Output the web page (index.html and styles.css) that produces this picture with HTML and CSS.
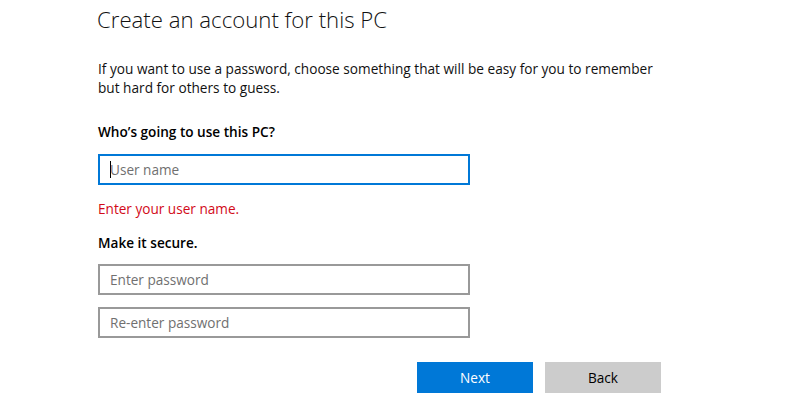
FILE: index.html
```html
<!DOCTYPE html>
<html>
<head>
<meta charset="utf-8">
<link rel="stylesheet" href="styles.css">
</head>
<body>
<div class="page">
  <h1 class="title">Create an account for this PC</h1>
  <p class="intro">If you want to use a password, choose something that will be easy for you to remember<br>but hard for others to guess.</p>
  <h2 class="label">Who’s going to use this PC?</h2>
  <div class="field field-focus"><span class="caret"></span><span class="ph">User name</span></div>
  <p class="error">Enter your user name.</p>
  <h2 class="label label-secure">Make it secure.</h2>
  <div class="field"><span class="ph">Enter password</span></div>
  <div class="field field-second"><span class="ph">Re-enter password</span></div>
  <div class="actions">
    <div class="btn btn-primary">Next</div>
    <div class="btn btn-secondary">Back</div>
  </div>
</div>
</body>
</html>
```
FILE: styles.css
```css
html, body {
  margin: 0;
  padding: 0;
  background: #ffffff;
}
body {
  width: 800px;
  height: 400px;
  overflow: hidden;
  font-family: "Open Sans", "Noto Sans", sans-serif;
  color: #000;
}
.page {
  padding: 0 0 0 98px;
  display: flex;
  flex-direction: column;
  align-items: flex-start;
}
.title {
  margin: 5px 0 0 -1px;
  font-size: 22.2px;
  font-weight: 300;
  line-height: 30px;
  color: #111;
}
.intro {
  margin: 24px 0 0 0;
  font-size: 13.65px;
  line-height: 19px;
  color: #111;
}
.label {
  margin: 25px 0 0 0;
  font-size: 13.6px;
  font-weight: 600;
  line-height: 20px;
}
.label-secure {
  margin-top: 14px;
}
.field {
  box-sizing: border-box;
  width: 372px;
  height: 31px;
  margin-top: 11px;
  border: 2px solid #999999;
  display: flex;
  align-items: center;
  padding-left: 10px;
}
.field-focus {
  border-color: #0078d7;
  margin-top: 12px;
}
.field-second {
  margin-top: 12px;
}
.caret {
  width: 1px;
  height: 17px;
  background: #000;
  margin-right: -1px;
}
.ph {
  font-size: 13.6px;
  color: #707070;
}
.error {
  margin: 14px 0 0 0;
  font-size: 13.6px;
  line-height: 20px;
  color: #d20a18;
}
.actions {
  display: flex;
  gap: 12px;
  margin: 24px 0 0 319px;
}
.btn {
  width: 116px;
  height: 31px;
  display: flex;
  align-items: center;
  justify-content: center;
  font-size: 13.6px;
}
.btn-primary {
  background: #0078d7;
  color: #fff;
}
.btn-secondary {
  background: #cccccc;
  color: #000;
}
```
